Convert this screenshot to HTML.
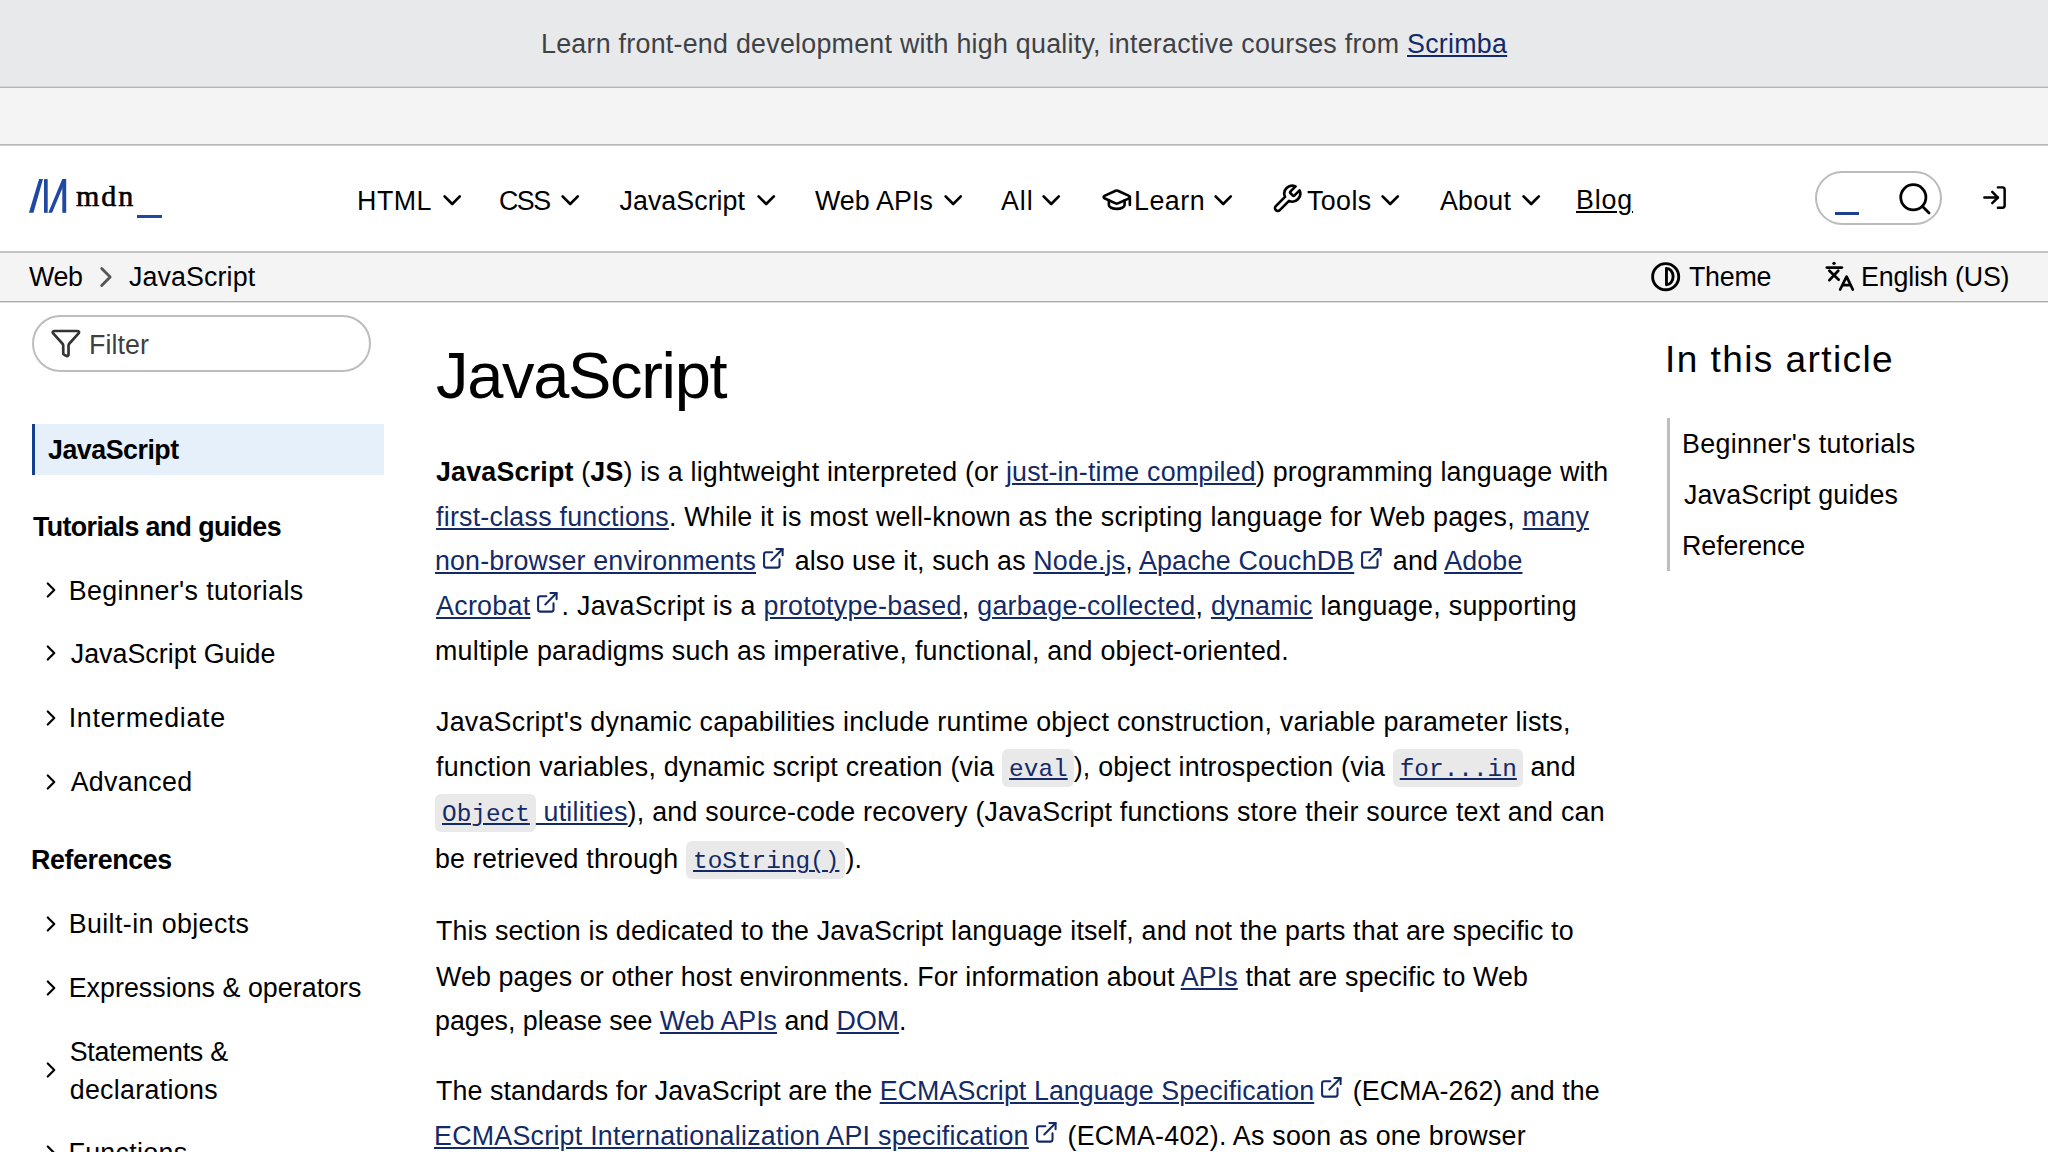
<!DOCTYPE html><html><head><meta charset="utf-8"><title>JavaScript | MDN</title><style>
*{margin:0;padding:0;box-sizing:border-box}
html,body{width:2048px;height:1152px;overflow:hidden;background:#fff}
body{font-family:"Liberation Sans",sans-serif;color:#000;position:relative}
.abs{position:absolute;display:block}
.t{position:absolute;white-space:pre;line-height:1}
a{color:#142a66;text-decoration:underline;text-decoration-thickness:1.7px;text-underline-offset:2.4px}
.ul{text-decoration:underline;text-decoration-thickness:1.7px;text-underline-offset:2.4px}
b{font-weight:700}
.ext{display:inline-block;width:31px;height:22px;position:relative;vertical-align:baseline;color:#142a66;letter-spacing:0}
.ext svg{position:absolute;left:5px;top:-2.3px}
code{font-family:"Liberation Mono",monospace;font-size:24.4px;letter-spacing:0;display:inline-block;background:#e9e9ea;border-radius:6px;padding:3px 6px 0 7px;line-height:35px;}
</style></head><body>
<div class="abs bg" style="left:0px;top:0px;width:2048px;height:87px;background:#e8e9eb"></div>
<div class="abs bg" style="left:0px;top:86px;width:2048px;height:1px;background:#d6d7d9"></div>
<div class="abs bg" style="left:0px;top:87px;width:2048px;height:1px;background:#b3b4b6"></div>
<div class="abs bg" style="left:0px;top:88px;width:2048px;height:56px;background:#f4f4f5"></div>
<div class="abs bg" style="left:0px;top:144px;width:2048px;height:1px;background:#b5b6b6"></div>
<div class="abs bg" style="left:0px;top:145px;width:2048px;height:1px;background:#cfd0d0"></div>
<div class="abs bg" style="left:0px;top:251px;width:2048px;height:1px;background:#c4c5c5"></div>
<div class="abs bg" style="left:0px;top:252px;width:2048px;height:1px;background:#c0c1c1"></div>
<div class="abs bg" style="left:0px;top:253px;width:2048px;height:48px;background:#f4f4f4"></div>
<div class="abs bg" style="left:0px;top:301px;width:2048px;height:1px;background:#adaeae"></div>
<div class="abs bg" style="left:0px;top:302px;width:2048px;height:1px;background:#dcdddd"></div>
<div class="abs bg" style="left:32px;top:424px;width:352px;height:51px;background:#e6f0fa"></div>
<div class="abs bg" style="left:32px;top:424px;width:3px;height:51px;background:#153f8c"></div>
<div class="abs bg" style="left:1667px;top:418px;width:3px;height:153px;background:#bdbdbd"></div>
<div class="abs bg" style="left:1815px;top:171px;width:127px;height:54px;border:2px solid #bbbbbb;border-radius:27px"></div>
<div class="abs bg" style="left:1835px;top:211.5px;width:24px;height:3px;background:#1f3f8f"></div>
<div class="abs bg" style="left:32px;top:315px;width:339px;height:57px;border:2px solid #bdbdbd;border-radius:29px"></div>
<svg class="abs bg" style="left:24px;top:175px" width="50" height="42"><g fill="#1e48a2"><polygon points="4.9,37.8 9.5,37.8 19,4.1 15.1,4.1"/><rect x="20" y="4.1" width="3.7" height="33.7"/><polygon points="24.3,37.8 28.1,37.8 42.2,4.1 38.3,4.1"/><rect x="38.3" y="4.1" width="3.9" height="33.7"/></g></svg>
<div class="abs bg" style="left:76px;top:175.8px;font-family:'Liberation Serif',serif;font-weight:400;font-size:30px;line-height:40px;color:#000;letter-spacing:1.9px;-webkit-text-stroke:0.6px #000">mdn</div>
<div class="abs bg" style="left:137px;top:214.5px;width:24.5px;height:3.2px;background:#1e48a2"></div>
<svg class="abs icon" style="left:1896.25px;top:179.55px" width="37.81" height="37.81" viewBox="0 0 24 24" fill="none" stroke="#000" stroke-width="1.75" stroke-linecap="round" stroke-linejoin="round"><circle cx="11" cy="11" r="8"/><path d="m21 21-4.3-4.3"/></svg>
<svg class="abs icon" style="left:1981.48px;top:184.49px" width="27.02" height="27.02" viewBox="0 0 24 24" fill="none" stroke="#000" stroke-width="2.2" stroke-linecap="round" stroke-linejoin="round"><path d="m10 17 5-5-5-5"/><path d="M15 12H3"/><path d="M15 3h4a2 2 0 0 1 2 2v14a2 2 0 0 1-2 2h-4"/></svg>
<svg class="abs icon" style="left:1100.76px;top:183.96px" width="31.48" height="31.48" viewBox="0 0 24 24" fill="none" stroke="#000" stroke-width="2.0" stroke-linecap="round" stroke-linejoin="round"><path d="M21.42 10.922a1 1 0 0 0-.019-1.838L12.83 5.18a2 2 0 0 0-1.66 0L2.6 9.08a1 1 0 0 0 0 1.832l8.57 3.908a2 2 0 0 0 1.66 0z"/><path d="M22 10v6"/><path d="M6 12.5V16a6 3 0 0 0 12 0v-3.5"/></svg>
<svg class="abs icon" style="left:1271.21px;top:183.29px" width="31.92" height="31.92" viewBox="0 0 24 24" fill="none" stroke="#000" stroke-width="2.0" stroke-linecap="round" stroke-linejoin="round"><path d="M14.7 6.3a1 1 0 0 0 0 1.4l1.6 1.6a1 1 0 0 0 1.4 0l3.77-3.77a6 6 0 0 1-7.94 7.94l-6.91 6.91a2.12 2.12 0 0 1-3-3l6.91-6.91a6 6 0 0 1 7.94-7.94l-3.76 3.76z"/></svg>
<svg class="abs icon" style="left:1649.55px;top:261.12px" width="31.35" height="31.35" viewBox="0 0 24 24" fill="none" stroke="#000" stroke-width="2.2" stroke-linecap="round" stroke-linejoin="round"><circle cx="12" cy="12" r="10"/><path d="M12.6 5.6A5.1 6.3 0 0 1 12.6 18.2Z"/></svg>
<svg class="abs icon" style="left:1822.25px;top:259.78px" width="35.42" height="35.42" viewBox="0 0 36 36" fill="none" stroke="#000" stroke-width="2.8" stroke-linecap="round" stroke-linejoin="round"><path d="M5 7.7H20.2"/><path d="M7.5 11L17 20M16.5 11L7.5 20.5"/><path d="M18.5 30L25 16.9L31.3 30M20.8 25.5H29.2"/><circle cx="12.2" cy="3.4" r="1.7" fill="#000" stroke="none"/></svg>
<svg class="abs icon" style="left:49.61px;top:327.35px" width="31.77" height="31.77" viewBox="0 0 24 24" fill="none" stroke="#333" stroke-width="2.0" stroke-linecap="round" stroke-linejoin="round"><path d="M10 20a1 1 0 0 0 .553.895l2 1A1 1 0 0 0 14 21v-7a2 2 0 0 1 .517-1.341L21.74 4.67A1 1 0 0 0 21 3H3a1 1 0 0 0-.742 1.67l7.225 7.989A2 2 0 0 1 10 14z"/></svg>
<svg class="abs icon" style="left:89.12px;top:259.92px" width="33.90" height="33.90" viewBox="0 0 24 24" fill="none" stroke="#555" stroke-width="2.0" stroke-linecap="round" stroke-linejoin="round"><path d="m9 18 6-6-6-6"/></svg>
<svg class="abs icon" style="left:436.62px;top:185.33px" width="30.42" height="30.42" viewBox="0 0 24 24" fill="none" stroke="#000" stroke-width="2.1" stroke-linecap="round" stroke-linejoin="round"><path d="m6 9 6 6 6-6"/></svg>
<svg class="abs icon" style="left:555.42px;top:185.33px" width="30.42" height="30.42" viewBox="0 0 24 24" fill="none" stroke="#000" stroke-width="2.1" stroke-linecap="round" stroke-linejoin="round"><path d="m6 9 6 6 6-6"/></svg>
<svg class="abs icon" style="left:751.32px;top:185.33px" width="30.42" height="30.42" viewBox="0 0 24 24" fill="none" stroke="#000" stroke-width="2.1" stroke-linecap="round" stroke-linejoin="round"><path d="m6 9 6 6 6-6"/></svg>
<svg class="abs icon" style="left:937.62px;top:185.33px" width="30.42" height="30.42" viewBox="0 0 24 24" fill="none" stroke="#000" stroke-width="2.1" stroke-linecap="round" stroke-linejoin="round"><path d="m6 9 6 6 6-6"/></svg>
<svg class="abs icon" style="left:1036.12px;top:185.33px" width="30.42" height="30.42" viewBox="0 0 24 24" fill="none" stroke="#000" stroke-width="2.1" stroke-linecap="round" stroke-linejoin="round"><path d="m6 9 6 6 6-6"/></svg>
<svg class="abs icon" style="left:1207.62px;top:185.33px" width="30.42" height="30.42" viewBox="0 0 24 24" fill="none" stroke="#000" stroke-width="2.1" stroke-linecap="round" stroke-linejoin="round"><path d="m6 9 6 6 6-6"/></svg>
<svg class="abs icon" style="left:1375.22px;top:185.33px" width="30.42" height="30.42" viewBox="0 0 24 24" fill="none" stroke="#000" stroke-width="2.1" stroke-linecap="round" stroke-linejoin="round"><path d="m6 9 6 6 6-6"/></svg>
<svg class="abs icon" style="left:1516.02px;top:185.33px" width="30.42" height="30.42" viewBox="0 0 24 24" fill="none" stroke="#000" stroke-width="2.1" stroke-linecap="round" stroke-linejoin="round"><path d="m6 9 6 6 6-6"/></svg>
<svg class="abs icon" style="left:38.12px;top:576.87px" width="26.06" height="26.06" viewBox="0 0 24 24" fill="none" stroke="#000" stroke-width="2.0" stroke-linecap="round" stroke-linejoin="round"><path d="m9 18 6-6-6-6"/></svg>
<svg class="abs icon" style="left:38.12px;top:640.42px" width="26.06" height="26.06" viewBox="0 0 24 24" fill="none" stroke="#000" stroke-width="2.0" stroke-linecap="round" stroke-linejoin="round"><path d="m9 18 6-6-6-6"/></svg>
<svg class="abs icon" style="left:38.12px;top:704.82px" width="26.06" height="26.06" viewBox="0 0 24 24" fill="none" stroke="#000" stroke-width="2.0" stroke-linecap="round" stroke-linejoin="round"><path d="m9 18 6-6-6-6"/></svg>
<svg class="abs icon" style="left:38.12px;top:768.62px" width="26.06" height="26.06" viewBox="0 0 24 24" fill="none" stroke="#000" stroke-width="2.0" stroke-linecap="round" stroke-linejoin="round"><path d="m9 18 6-6-6-6"/></svg>
<svg class="abs icon" style="left:38.12px;top:910.52px" width="26.06" height="26.06" viewBox="0 0 24 24" fill="none" stroke="#000" stroke-width="2.0" stroke-linecap="round" stroke-linejoin="round"><path d="m9 18 6-6-6-6"/></svg>
<svg class="abs icon" style="left:38.12px;top:974.52px" width="26.06" height="26.06" viewBox="0 0 24 24" fill="none" stroke="#000" stroke-width="2.0" stroke-linecap="round" stroke-linejoin="round"><path d="m9 18 6-6-6-6"/></svg>
<svg class="abs icon" style="left:38.12px;top:1056.62px" width="26.06" height="26.06" viewBox="0 0 24 24" fill="none" stroke="#000" stroke-width="2.0" stroke-linecap="round" stroke-linejoin="round"><path d="m9 18 6-6-6-6"/></svg>
<svg class="abs icon" style="left:38.12px;top:1140.42px" width="26.06" height="26.06" viewBox="0 0 24 24" fill="none" stroke="#000" stroke-width="2.0" stroke-linecap="round" stroke-linejoin="round"><path d="m9 18 6-6-6-6"/></svg>
<div id="ban" class="t" style="left:541.00px;top:31.01px;font-size:26.8px;font-weight:400;color:#3e4146;letter-spacing:0.264px">Learn front-end development with high quality, interactive courses from <a class="scr">Scrimba</a></div>
<div id="nav0" class="t" style="left:357.10px;top:187.91px;font-size:26.8px;font-weight:400;color:#000;letter-spacing:0.467px">HTML</div>
<div id="nav1" class="t" style="left:499.00px;top:187.91px;font-size:26.8px;font-weight:400;color:#000;letter-spacing:-1.500px">CSS</div>
<div id="nav2" class="t" style="left:619.50px;top:187.91px;font-size:26.8px;font-weight:400;color:#000;letter-spacing:0.044px">JavaScript</div>
<div id="nav3" class="t" style="left:814.90px;top:187.91px;font-size:26.8px;font-weight:400;color:#000;letter-spacing:0.114px">Web APIs</div>
<div id="nav4" class="t" style="left:1001.00px;top:187.91px;font-size:26.8px;font-weight:400;color:#000;letter-spacing:1.000px">All</div>
<div id="nav5" class="t" style="left:1134.00px;top:187.91px;font-size:26.8px;font-weight:400;color:#000;letter-spacing:0.500px">Learn</div>
<div id="nav6" class="t" style="left:1307.00px;top:187.91px;font-size:26.8px;font-weight:400;color:#000;letter-spacing:0.400px">Tools</div>
<div id="nav7" class="t" style="left:1440.00px;top:187.91px;font-size:26.8px;font-weight:400;color:#000;letter-spacing:0.200px">About</div>
<div id="blog" class="t" style="left:1576.00px;top:186.91px;font-size:26.8px;font-weight:400;color:#000;letter-spacing:0.867px"><span class="ul">Blog</span></div>
<div id="bc1" class="t" style="left:29.00px;top:264.41px;font-size:26.8px;font-weight:400;color:#000;letter-spacing:-0.350px">Web</div>
<div id="bc2" class="t" style="left:129.00px;top:264.41px;font-size:26.8px;font-weight:400;color:#000;letter-spacing:0.111px">JavaScript</div>
<div id="theme" class="t" style="left:1689.00px;top:263.61px;font-size:26.8px;font-weight:400;color:#000;letter-spacing:-0.250px">Theme</div>
<div id="lang" class="t" style="left:1861.00px;top:263.61px;font-size:26.8px;font-weight:400;color:#000;letter-spacing:-0.173px">English (US)</div>
<div id="filter" class="t" style="left:89.00px;top:331.91px;font-size:26.8px;font-weight:400;color:#3f3f3f;letter-spacing:0.080px">Filter</div>
<div id="sjs" class="t" style="left:48.00px;top:437.31px;font-size:26.8px;font-weight:700;color:#000;letter-spacing:-0.489px">JavaScript</div>
<div id="stut" class="t" style="left:33.00px;top:514.11px;font-size:26.8px;font-weight:700;color:#000;letter-spacing:-0.605px">Tutorials and guides</div>
<div id="sb0" class="t" style="left:68.70px;top:577.81px;font-size:26.8px;font-weight:400;color:#000;letter-spacing:0.389px">Beginner's tutorials</div>
<div id="sb1" class="t" style="left:70.70px;top:641.11px;font-size:26.8px;font-weight:400;color:#000;letter-spacing:0.040px">JavaScript Guide</div>
<div id="sb2" class="t" style="left:68.70px;top:704.61px;font-size:26.8px;font-weight:400;color:#000;letter-spacing:0.673px">Intermediate</div>
<div id="sb3" class="t" style="left:70.70px;top:769.31px;font-size:26.8px;font-weight:400;color:#000;letter-spacing:0.314px">Advanced</div>
<div id="sref" class="t" style="left:31.00px;top:846.91px;font-size:26.8px;font-weight:700;color:#000;letter-spacing:-0.367px">References</div>
<div id="sc0" class="t" style="left:68.70px;top:911.21px;font-size:26.8px;font-weight:400;color:#000;letter-spacing:0.400px">Built-in objects</div>
<div id="sc1" class="t" style="left:68.70px;top:975.21px;font-size:26.8px;font-weight:400;color:#000;letter-spacing:0.036px">Expressions &amp; operators</div>
<div id="sc2" class="t" style="left:69.70px;top:1038.91px;font-size:26.8px;font-weight:400;color:#000;letter-spacing:-0.218px">Statements &amp;</div>
<div id="sc3" class="t" style="left:69.70px;top:1077.21px;font-size:26.8px;font-weight:400;color:#000;letter-spacing:0.309px">declarations</div>
<div id="sc4" class="t" style="left:68.50px;top:1140.11px;font-size:26.8px;font-weight:400;color:#000;letter-spacing:0.300px">Functions</div>
<div id="toch" class="t" style="left:1665.00px;top:340.98px;font-size:37px;font-weight:400;color:#000;letter-spacing:1.429px">In this article</div>
<div id="toc0" class="t" style="left:1682.00px;top:430.91px;font-size:26.8px;font-weight:400;color:#000;letter-spacing:0.326px">Beginner's tutorials</div>
<div id="toc1" class="t" style="left:1684.00px;top:481.91px;font-size:26.8px;font-weight:400;color:#000;letter-spacing:0.156px">JavaScript guides</div>
<div id="toc2" class="t" style="left:1682.00px;top:533.01px;font-size:26.8px;font-weight:400;color:#000;letter-spacing:-0.062px">Reference</div>
<div id="h1" class="t" style="left:436.00px;top:343.28px;font-size:65px;font-weight:400;color:#000;letter-spacing:-1.311px">JavaScript</div>
<div id="p0" class="t" style="left:436.00px;top:459.41px;font-size:26.8px;font-weight:400;color:#000;letter-spacing:0.202px"><b>JavaScript</b> (<b>JS</b>) is a lightweight interpreted (or <a>just-in-time compiled</a>) programming language with</div>
<div id="p1" class="t" style="left:436.00px;top:504.11px;font-size:26.8px;font-weight:400;color:#000;letter-spacing:0.241px"><a>first-class functions</a>. While it is most well-known as the scripting language for Web pages, <a>many</a></div>
<div id="p2" class="t" style="left:435.00px;top:547.81px;font-size:26.8px;font-weight:400;color:#000;letter-spacing:0.158px"><a>non-browser environments</a><span class="ext"><svg width="24.7" height="24.7" viewBox="0 0 24 24" fill="none" stroke="currentColor" stroke-width="2" stroke-linecap="round" stroke-linejoin="round"><path d="M15 3h6v6"/><path d="M10 14 21 3"/><path d="M18 13v6a2 2 0 0 1-2 2H5a2 2 0 0 1-2-2V8a2 2 0 0 1 2-2h6"/></svg></span> also use it, such as <a>Node.js</a>, <a>Apache CouchDB</a><span class="ext"><svg width="24.7" height="24.7" viewBox="0 0 24 24" fill="none" stroke="currentColor" stroke-width="2" stroke-linecap="round" stroke-linejoin="round"><path d="M15 3h6v6"/><path d="M10 14 21 3"/><path d="M18 13v6a2 2 0 0 1-2 2H5a2 2 0 0 1-2-2V8a2 2 0 0 1 2-2h6"/></svg></span> and <a>Adobe</a></div>
<div id="p3" class="t" style="left:436.00px;top:592.51px;font-size:26.8px;font-weight:400;color:#000;letter-spacing:0.302px"><a>Acrobat</a><span class="ext"><svg width="24.7" height="24.7" viewBox="0 0 24 24" fill="none" stroke="currentColor" stroke-width="2" stroke-linecap="round" stroke-linejoin="round"><path d="M15 3h6v6"/><path d="M10 14 21 3"/><path d="M18 13v6a2 2 0 0 1-2 2H5a2 2 0 0 1-2-2V8a2 2 0 0 1 2-2h6"/></svg></span>. JavaScript is a <a>prototype-based</a>, <a>garbage-collected</a>, <a>dynamic</a> language, supporting</div>
<div id="p4" class="t" style="left:435.00px;top:638.21px;font-size:26.8px;font-weight:400;color:#000;letter-spacing:0.237px">multiple paradigms such as imperative, functional, and object-oriented.</div>
<div id="p5" class="t" style="left:436.00px;top:709.11px;font-size:26.8px;font-weight:400;color:#000;letter-spacing:0.254px">JavaScript's dynamic capabilities include runtime object construction, variable parameter lists,</div>
<div id="p6" class="t" style="left:436.00px;top:748.91px;font-size:26.8px;font-weight:400;color:#000;letter-spacing:0.216px">function variables, dynamic script creation (via <code><a>eval</a></code>), object introspection (via <code><a>for...in</a></code> and</div>
<div id="p7" class="t" style="left:435.00px;top:793.71px;font-size:26.8px;font-weight:400;color:#000;letter-spacing:0.241px"><a><code><span class="ul">Object</span></code> utilities</a>), and source-code recovery (JavaScript functions store their source text and can</div>
<div id="p8" class="t" style="left:435.00px;top:841.31px;font-size:26.8px;font-weight:400;color:#000;letter-spacing:0.177px">be retrieved through <code><a>toString()</a></code>).</div>
<div id="p9" class="t" style="left:436.00px;top:917.81px;font-size:26.8px;font-weight:400;color:#000;letter-spacing:0.163px">This section is dedicated to the JavaScript language itself, and not the parts that are specific to</div>
<div id="p10" class="t" style="left:436.00px;top:963.81px;font-size:26.8px;font-weight:400;color:#000;letter-spacing:0.131px">Web pages or other host environments. For information about <a>APIs</a> that are specific to Web</div>
<div id="p11" class="t" style="left:435.00px;top:1008.41px;font-size:26.8px;font-weight:400;color:#000;letter-spacing:-0.006px">pages, please see <a>Web APIs</a> and <a>DOM</a>.</div>
<div id="p12" class="t" style="left:436.00px;top:1077.71px;font-size:26.8px;font-weight:400;color:#000;letter-spacing:0.076px">The standards for JavaScript are the <a>ECMAScript Language Specification</a><span class="ext"><svg width="24.7" height="24.7" viewBox="0 0 24 24" fill="none" stroke="currentColor" stroke-width="2" stroke-linecap="round" stroke-linejoin="round"><path d="M15 3h6v6"/><path d="M10 14 21 3"/><path d="M18 13v6a2 2 0 0 1-2 2H5a2 2 0 0 1-2-2V8a2 2 0 0 1 2-2h6"/></svg></span> (ECMA-262) and the</div>
<div id="p13" class="t" style="left:434.00px;top:1122.71px;font-size:26.8px;font-weight:400;color:#000;letter-spacing:0.253px"><a>ECMAScript Internationalization API specification</a><span class="ext"><svg width="24.7" height="24.7" viewBox="0 0 24 24" fill="none" stroke="currentColor" stroke-width="2" stroke-linecap="round" stroke-linejoin="round"><path d="M15 3h6v6"/><path d="M10 14 21 3"/><path d="M18 13v6a2 2 0 0 1-2 2H5a2 2 0 0 1-2-2V8a2 2 0 0 1 2-2h6"/></svg></span> (ECMA-402). As soon as one browser</div>
</body></html>
